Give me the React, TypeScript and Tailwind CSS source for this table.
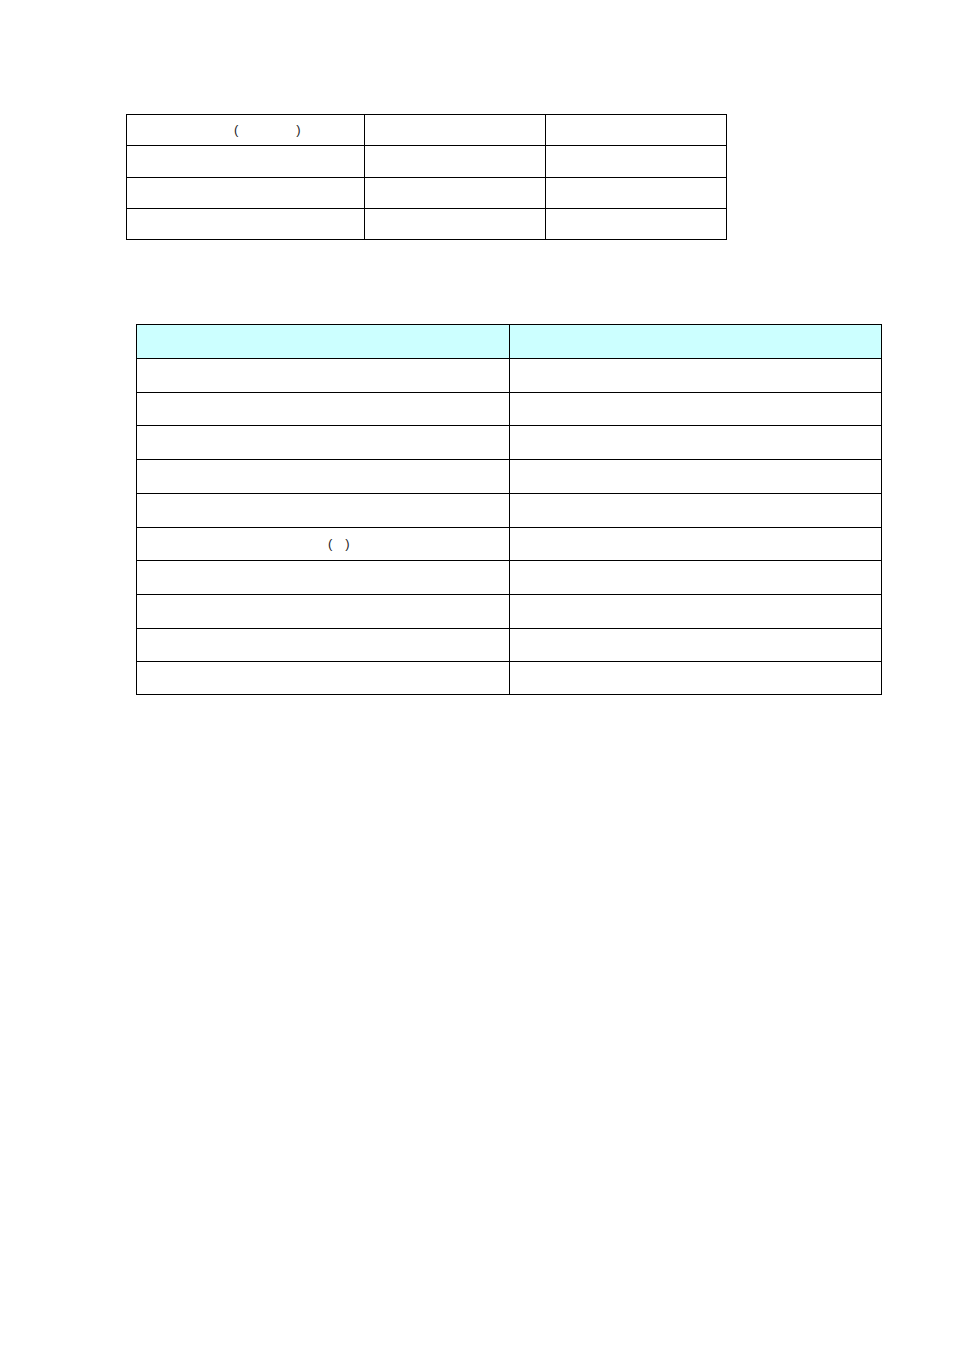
const topRows = [31, 32, 31, 31];
const bottomRows = [34, 33, 34, 34, 34, 33, 34, 34, 33, 33];

export default function App() {
  return (
    <div className="min-h-[1350px] w-[954px] bg-white pt-[114px] font-['Liberation_Sans',sans-serif] text-[13px] text-[#222]">
      {/* First table */}
      <div className="ml-[126px] w-[601px] border-l border-t border-black">
        {topRows.map((h, i) => (
          <div key={i} className="flex">
            <div
              className="flex w-[238px] items-center border-b border-r border-black pl-[107px]"
              style={{ height: h }}
            >
              {i === 0 && (
                <>
                  <span>(</span>
                  <span className="ml-[58px]">)</span>
                </>
              )}
            </div>
            <div className="w-[181px] border-b border-r border-black" style={{ height: h }} />
            <div className="w-[181px] border-b border-r border-black" style={{ height: h }} />
          </div>
        ))}
      </div>

      {/* Second table */}
      <div className="ml-[136px] mt-[84px] w-[746px] border-l border-t border-black">
        <div className="flex bg-[#ccffff]">
          <div className="h-[34px] w-[373px] border-b border-r border-black" />
          <div className="h-[34px] w-[372px] border-b border-r border-black" />
        </div>
        {bottomRows.map((h, i) => (
          <div key={i} className="flex">
            <div
              className="flex w-[373px] items-center border-b border-r border-black pl-[191px]"
              style={{ height: h }}
            >
              {i === 5 && (
                <>
                  <span>(</span>
                  <span className="ml-[13px]">)</span>
                </>
              )}
            </div>
            <div className="w-[372px] border-b border-r border-black" style={{ height: h }} />
          </div>
        ))}
      </div>
    </div>
  );
}
